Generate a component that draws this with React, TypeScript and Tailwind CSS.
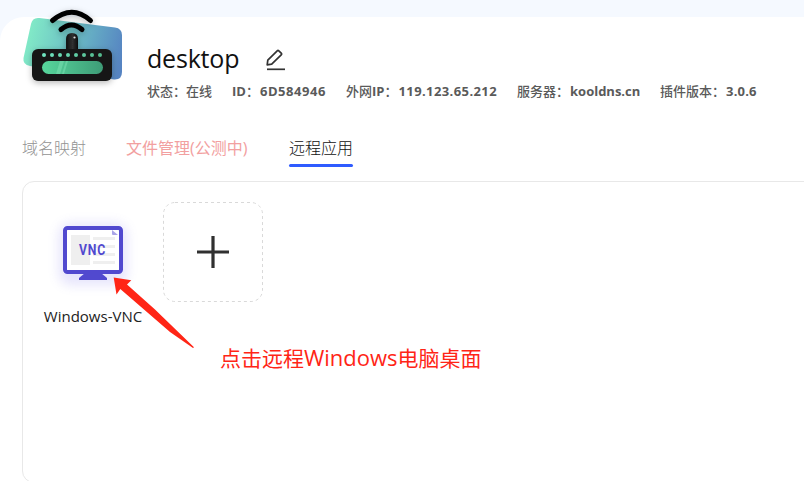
import type { ReactNode } from 'react';

function RouterLogo() {
  return (
    <svg className="block h-[92px] w-[112px]" viewBox="16 0 112 92" fill="none">
      <defs>
        <linearGradient id="card" x1="24" y1="35" x2="122" y2="58" gradientUnits="userSpaceOnUse">
          <stop stopColor="#83edc7" />
          <stop offset="0.5" stopColor="#6bbdc5" />
          <stop offset="1" stopColor="#5684c2" />
        </linearGradient>
        <linearGradient id="screen" x1="42" y1="0" x2="103" y2="0" gradientUnits="userSpaceOnUse">
          <stop stopColor="#57d69c" />
          <stop offset="1" stopColor="#3e9c77" />
        </linearGradient>
        <linearGradient id="lights" x1="42" y1="0" x2="103" y2="0" gradientUnits="userSpaceOnUse">
          <stop stopColor="#70e5c1" />
          <stop offset="1" stopColor="#53b98c" />
        </linearGradient>
        <linearGradient id="antenna" x1="66" y1="0" x2="78" y2="0" gradientUnits="userSpaceOnUse">
          <stop stopColor="#111" />
          <stop offset="0.55" stopColor="#303030" />
          <stop offset="1" stopColor="#0c0c0c" />
        </linearGradient>
        <filter id="logoShadow" x="-20%" y="-20%" width="140%" height="150%">
          <feDropShadow dx="0" dy="2" stdDeviation="3" floodColor="#000" floodOpacity="0.28" />
        </filter>
      </defs>
      <path
        d="M39.5 18 L115 27.5 Q122 28.500 122 35 V72 Q122 80 114 79.500 L30 66 Q22.500 64.500 23.500 58 L31 24 Q32.500 17 39.500 18Z"
        fill="url(#card)"
      />
      <g filter="url(#logoShadow)">
        <path d="M52.500 20.500 Q72 4 90.500 20.500" stroke="#000" strokeWidth="5" strokeLinecap="round" />
        <path d="M61 29.500 Q71.500 20.500 82 29.500" stroke="#000" strokeWidth="5" strokeLinecap="round" />
        <path d="M66 52 V39 Q66 33 72 33 Q78 33 78 39 V52Z" fill="url(#antenna)" />
        <rect x="32" y="49" width="80" height="32" rx="6" fill="#151515" />
      </g>
      <circle cx="74.500" cy="37.500" r="1.100" fill="#ddd" />
      {[44, 52, 60, 68, 76, 84, 92, 100].map((x) => (
        <circle key={x} cx={x} cy="55" r="2" fill="url(#lights)" />
      ))}
      <rect x="42" y="61" width="61" height="13" rx="6.500" fill="url(#screen)" />
      <path d="M60 61 H64 L60 74 H56Z M66 61 H68 L64 74 H62Z" fill="#8aeabd" opacity="0.4" />
    </svg>
  );
}

function EditIcon() {
  return (
    <svg className="mt-[2px] ml-[27px] block h-[22px] w-[20px]" viewBox="0 0 20 22" fill="none" stroke="#333" strokeWidth="1.7">
      <path d="M1.200 15.800 L1.800 11.200 L11.200 1.800 Q12 1 12.800 1.800 L15.200 4.200 Q16 5 15.200 5.800 L5.700 15.200Z" strokeLinejoin="round" />
      <path d="M1 20.300 H19" />
    </svg>
  );
}

function VncIcon() {
  return (
    <svg className="block h-[100px] w-[100px]" viewBox="43 202 100 100" fill="none">
      <defs>
        <filter id="glow" x="-50%" y="-50%" width="200%" height="200%">
          <feGaussianBlur stdDeviation="6" />
        </filter>
      </defs>
      <rect x="59" y="223" width="68" height="62" rx="12" fill="#6c62ec" opacity="0.17" filter="url(#glow)" />
      <path d="M85 273 H101 L107 278 V280 H79 V278Z" fill="#5149cf" />
      <rect x="65" y="228" width="56" height="44" rx="2.500" fill="#fff" stroke="#5149cf" strokeWidth="4" />
      <path d="M71 235 H90 V265 H71Z M93 237 H115 V240 H93Z M93 245 H115 V248 H93Z M93 253 H115 V256 H93Z M93 261 H115 V264 H93Z" fill="#efefef" />
      <path d="M112 230 L118 235 H113 Q112 235 112 234Z" fill="#a9a4e7" />
      <text
        x="79"
        y="255"
        textLength="27"
        lengthAdjust="spacingAndGlyphs"
        fill="#5149cf"
        className="font-['Roboto',sans-serif] text-[15.5px] font-bold tracking-[1px]"
      >
        VNC
      </text>
    </svg>
  );
}

function Info({ label, children, width }: { label: ReactNode; children?: ReactNode; width: string }) {
  return (
    <div className={`${width} flex shrink-0 whitespace-nowrap`}>
      <span className="font-medium">{label}</span>
      {children}
    </div>
  );
}

export default function App() {
  return (
    <div className="h-[481px] w-[804px] overflow-hidden bg-[#f5f9ff] pt-[17px] font-['Open_Sans','Noto_Sans_CJK_SC',sans-serif]">
      <main className="h-[480px] rounded-tl-[24px] bg-white pl-[22px]">
        <header className="flex h-[87px]">
          <div className="-mt-[17px] -ml-[6px] shrink-0">
            <RouterLogo />
          </div>
          <div className="ml-[19px] pt-[24px]">
            <div className="flex items-center">
              <h1 className="h-[36px] w-[92px] text-[25px] leading-[35px] tracking-[-0.2px] text-[#111]">desktop</h1>
              <EditIcon />
            </div>
            <div className="mt-[5px] flex text-[13px] leading-[18px] text-[#5a5a5a]">
              <Info width="w-[85px]" label="状态：在线" />
              <Info width="w-[114px]" label={<><b>ID</b>：</>}><b className="ml-[1px] tracking-[0.55px]">6D584946</b></Info>
              <Info width="w-[171px]" label={<>外网<b>IP</b>：</>}><b className="ml-[1px] tracking-[0.4px]">119.123.65.212</b></Info>
              <Info width="w-[143px]" label="服务器："><b className="ml-[1px]">kooldns.cn</b></Info>
              <Info width="w-[110px]" label="插件版本："><b className="ml-[1px] tracking-[0.2px]">3.0.6</b></Info>
            </div>
          </div>
        </header>
        <nav className="mt-[32px] flex h-[31px] text-[16px] leading-[24px]">
          <span className="w-[104px] font-light text-[#939393]">域名映射</span>
          <span className="w-[163px] text-[#f2a0a0]">文件管理(公测中)</span>
          <span className="h-[31px] w-[64px] font-light text-[#111]">
            远程应用
            <span className="mt-[4px] block h-[3px] rounded-full bg-[#2f5bff]" />
          </span>
        </nav>
        <section className="relative mt-[14px] flex h-[302px] w-[820px] rounded-[12px] border border-[#e8e8e8] pt-[20px] pl-[20px]">
          <div className="w-[100px]">
            <VncIcon />
            <p className="mt-[3px] text-center text-[15px] leading-[22px] whitespace-nowrap text-[#222]">Windows-VNC</p>
          </div>
          <button className="ml-[20px] flex h-[100px] w-[100px] items-center justify-center">
            <svg className="block h-[100px] w-[100px]" viewBox="0 0 100 100" fill="none">
              <rect x="0.500" y="0.500" width="99" height="99" rx="11.500" stroke="#d9d9d9" strokeDasharray="3 3" />
              <path d="M34 50 H66 M50 34 V66" stroke="#303030" strokeWidth="3.200" />
            </svg>
          </button>
          <svg className="absolute top-[94px] left-[88px] h-[76px] w-[86px]" viewBox="111 276 86 76">
            <path d="M113.700 277.500 L131.300 280.300 L127 284.500 L155 309.500 L194 347.300 L193 348 L170 332 L120.300 289 L116.500 294.500Z" fill="#ff2516" />
          </svg>
          <p className="absolute top-[159px] left-[197px] text-[21px] leading-[32px] whitespace-nowrap text-[#ff2516]">
            点击远程<span className="text-[22px]">Windows</span>电脑桌面
          </p>
        </section>
      </main>
    </div>
  );
}
